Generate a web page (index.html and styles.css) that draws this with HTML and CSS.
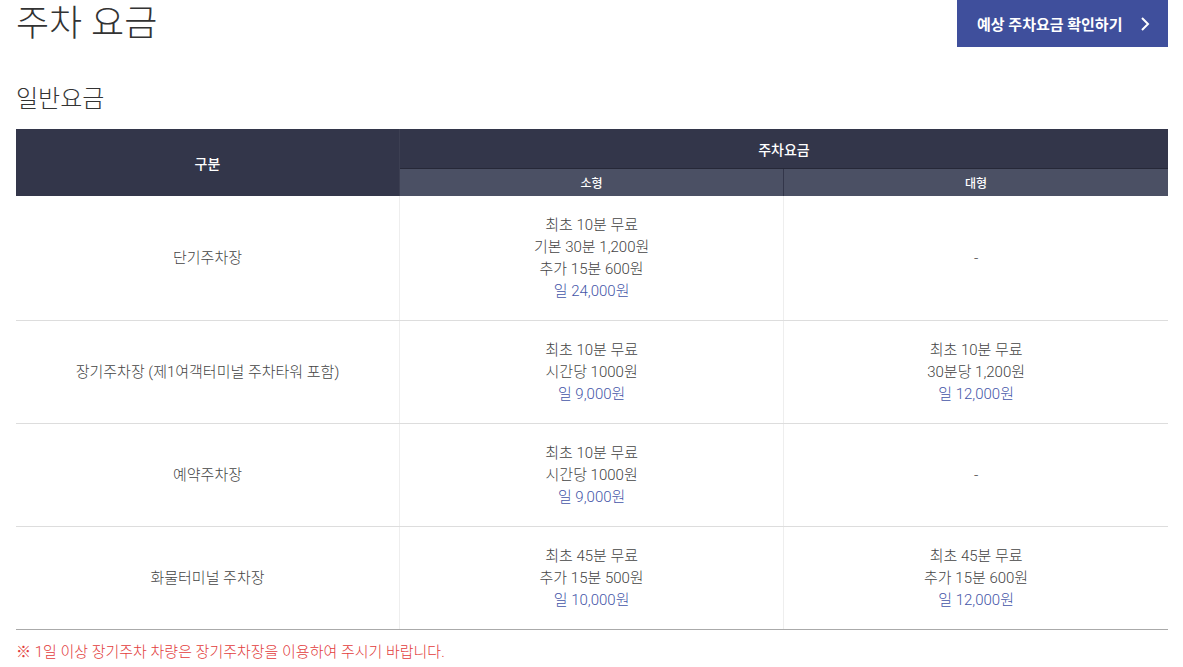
FILE: index.html
```html
<!DOCTYPE html>
<html lang="ko">
<head>
  <meta charset="UTF-8" />
  <meta name="viewport" content="width=device-width, initial-scale=1.0" />
  <title>주차 요금</title>
  <link rel="stylesheet" href="styles.css">
</head>
<body>
  <div class="content">
    <div class="page-head">
      <h1>주차 요금</h1>
      <a class="calc-button" href="#">
        예상 주차요금 확인하기
        <svg width="12" height="16" viewBox="0 0 12 16"><path d="M3 2 L9 8 L3 14" fill="none" stroke="#fff" stroke-width="2"/></svg>
      </a>
    </div>

    <h2>일반요금</h2>

    <table class="fee-table">
      <thead>
        <tr>
          <th rowspan="2" class="col-name">구분</th>
          <th colspan="2" class="top">주차요금</th>
        </tr>
        <tr class="sub">
          <th>소형</th>
          <th>대형</th>
        </tr>
      </thead>
      <tbody>
        <tr>
          <td>단기주차장</td>
          <td>최초 10분 무료<br>기본 30분 1,200원<br>추가 15분 600원<br><span class="day">일 24,000원</span></td>
          <td>-</td>
        </tr>
        <tr>
          <td>장기주차장 (제1여객터미널 주차타워 포함)</td>
          <td>최초 10분 무료<br>시간당 1000원<br><span class="day">일 9,000원</span></td>
          <td>최초 10분 무료<br>30분당 1,200원<br><span class="day">일 12,000원</span></td>
        </tr>
        <tr>
          <td>예약주차장</td>
          <td>최초 10분 무료<br>시간당 1000원<br><span class="day">일 9,000원</span></td>
          <td>-</td>
        </tr>
        <tr>
          <td>화물터미널 주차장</td>
          <td>최초 45분 무료<br>추가 15분 500원<br><span class="day">일 10,000원</span></td>
          <td>최초 45분 무료<br>추가 15분 600원<br><span class="day">일 12,000원</span></td>
        </tr>
      </tbody>
    </table>

    <p class="note">※ 1일 이상 장기주차 차량은 장기주차장을 이용하여 주시기 바랍니다.</p>
  </div>
</body>
</html>
```

FILE: styles.css
```css
body {
  margin: 0;
  font-family: Roboto, "Noto Sans CJK KR", sans-serif;
  color: #555;
  background: #fff;
}

.content {
  padding: 0 15px 0 16px;
}

.page-head {
  display: flex;
  justify-content: space-between;
  align-items: flex-start;
}

h1 {
  margin: -2px 0 0;
  font-size: 36px;
  font-weight: 300;
  line-height: 52px;
  color: #333;
}

.calc-button {
  display: flex;
  align-items: center;
  justify-content: space-between;
  width: 211px;
  height: 47px;
  box-sizing: border-box;
  padding: 0 17px 0 20px;
  background-color: #3f4f9c;
  color: #fff;
  font-size: 15px;
  font-weight: 700;
  text-decoration: none;
}

h2 {
  margin: 31px 0 12px;
  font-size: 24px;
  font-weight: 300;
  line-height: 36px;
  color: #333;
}

.fee-table {
  width: 100%;
  border-collapse: collapse;
  table-layout: fixed;
  font-size: 15px;
  text-align: center;
}

.fee-table th {
  padding: 0;
  color: #fff;
  font-weight: 500;
}

.fee-table th.col-name {
  width: 383px;
  background-color: #33364a;
  border-right: 1px solid #3c3f52;
  font-size: 14px;
}

.fee-table th.top {
  height: 39px;
  background-color: #33364a;
  border-bottom: 1px solid #262838;
  font-size: 14px;
}

.fee-table tr.sub th {
  height: 27px;
  background-color: #4b5064;
  font-size: 12px;
}

.fee-table tr.sub th + th {
  border-left: 1px solid #33364a;
}

.fee-table td {
  padding: 18px 8px;
  line-height: 22px;
  font-weight: 300;
  color: #444;
  border-bottom: 1px solid #ddd;
  border-left: 1px solid #eee;
}

.fee-table td:first-child {
  border-left: none;
}

.fee-table tbody tr:last-child td {
  border-bottom-color: #aaa;
}

.day {
  color: #4556a8;
}

.note {
  margin: 10px 0 0;
  font-size: 15px;
  font-weight: 300;
  color: #e23c3c;
}
```
